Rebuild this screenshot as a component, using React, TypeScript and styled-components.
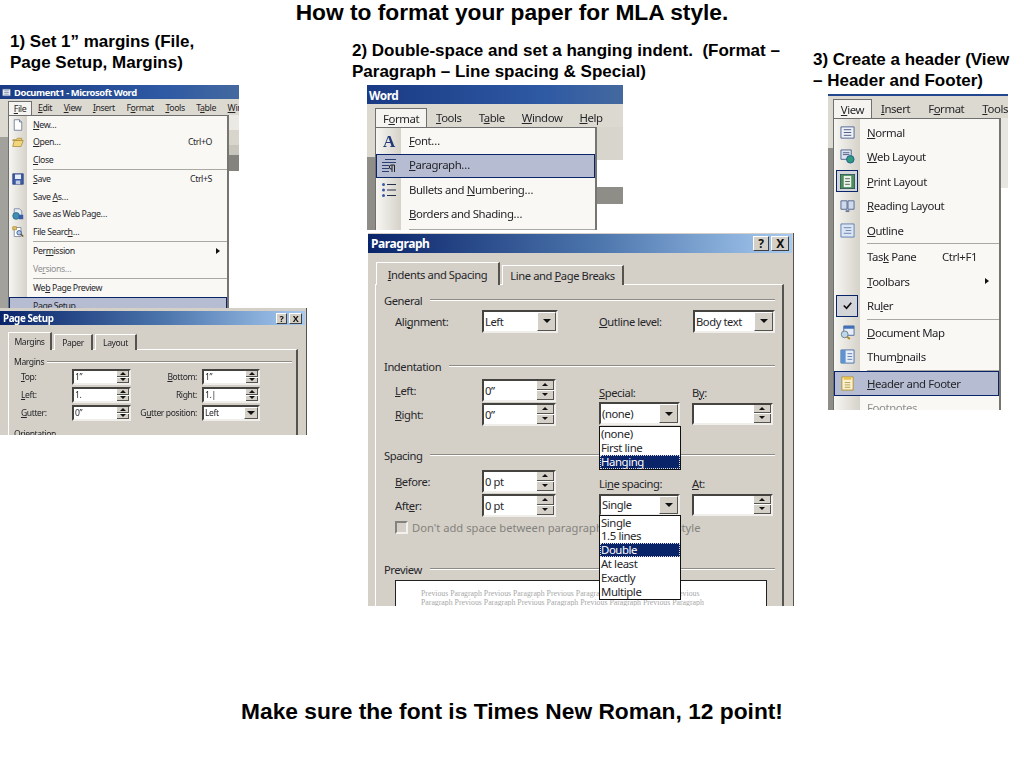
import React from "react";
import styled, { createGlobalStyle } from "styled-components";

const Global = createGlobalStyle`
  html, body { margin: 0; padding: 0; background: #fff; }
  #root { width: 1024px; height: 768px; overflow: hidden; }
`;

const UI = `"Noto Sans", "Open Sans", "Liberation Sans", sans-serif`;

const Page = styled.div`
  width: 1024px;
  height: 768px;
  display: flex;
  flex-direction: column;
  font-family: "Liberation Sans", Arial, sans-serif;
  color: #000;
  background: #fff;
`;
const Heading = styled.h1`
  margin: 0;
  height: 24px;
  font-size: 22.75px;
  line-height: 24px;
  font-weight: 700;
  text-align: center;
`;
const Columns = styled.div`
  display: grid;
  grid-template-columns: 352px 461px 211px;
  align-items: start;
`;
const Column = styled.section<{ $top: number; $gap: number }>`
  padding-top: ${(p) => p.$top}px;
  & > p { margin-bottom: ${(p) => p.$gap}px; }
`;
const Caption = styled.p<{ $left: number }>`
  margin: 0;
  padding-left: ${(p) => p.$left}px;
  font-size: 17px;
  line-height: 21px;
  font-weight: 700;
  white-space: pre;
`;
const Footer = styled.p`
  margin: auto 0 0;
  padding-bottom: 44px;
  font-size: 22.75px;
  line-height: 26px;
  font-weight: 700;
  text-align: center;
`;
const Shot = styled.div<{ $left?: number }>`
  margin-left: ${(p) => p.$left ?? 0}px;
  filter: blur(0.35px);
  font-family: ${UI};
  letter-spacing: -0.026em;
  color: #26262a;
`;

/* ---------- Word window ---------- */
const WordWindow = styled.div<{ $w: number; $h: number }>`
  width: ${(p) => p.$w}px;
  height: ${(p) => p.$h}px;
  overflow: hidden;
  display: flex;
  flex-direction: column;
  background: #fff;
`;
const WordTitle = styled.div<{ $h: number; $size: number }>`
  height: ${(p) => p.$h}px;
  flex: none;
  display: flex;
  align-items: center;
  gap: 3px;
  padding-left: 2px;
  background: linear-gradient(to right, #1a3a84, #2f5aa4 70%, #44699f);
  color: #fff;
  font-weight: 700;
  font-size: ${(p) => p.$size}px;
  white-space: nowrap;
`;
const TopRule = styled.div`
  height: 2px;
  flex: none;
  background: #24468e;
`;
const MenuBar = styled.div<{ $h: number; $pad: number; $gap: number; $size: number }>`
  height: ${(p) => p.$h}px;
  flex: none;
  display: flex;
  align-items: flex-end;
  gap: ${(p) => p.$gap}px;
  padding-left: ${(p) => p.$pad}px;
  background: #dcd9d0;
  font-size: ${(p) => p.$size}px;
  white-space: nowrap;
  overflow: hidden;
`;
const MenuTitle = styled.span<{ $open?: boolean; $w?: number; $h: number; $pull?: number }>`
  height: ${(p) => p.$h}px;
  display: flex;
  align-items: center;
  justify-content: center;
  flex: none;
  box-sizing: border-box;
  width: ${(p) => (p.$w ? `${p.$w}px` : "auto")};
  margin-right: ${(p) => -(p.$pull ?? 0)}px;
  ${(p) =>
    p.$open
      ? `border: 1px solid #707070; border-bottom: 0; background: #f5f4f0;`
      : ``}
`;
const WordBody = styled.div`
  flex: 1;
  display: flex;
  min-height: 0;
`;
const Strip = styled.div<{ $w: number; $bands: string }>`
  width: ${(p) => p.$w}px;
  flex: none;
  background: linear-gradient(to bottom, ${(p) => p.$bands});
`;
const Menu = styled.div<{ $w: number; $gutter: number; $top: number }>`
  width: ${(p) => p.$w}px;
  flex: none;
  box-sizing: border-box;
  border: 1px solid #6f6f6f;
  border-right: 2px solid #77756f;
  border-bottom: 0;
  padding-top: ${(p) => p.$top}px;
  background: linear-gradient(
    to right,
    #f7f6f2 0,
    #d5d2c9 ${(p) => p.$gutter}px,
    #f9f8f5 ${(p) => p.$gutter}px
  );
`;
const Row = styled.div<{ $h: number; $active?: boolean; $muted?: boolean; $size: number }>`
  height: ${(p) => p.$h}px;
  display: flex;
  align-items: center;
  box-sizing: border-box;
  font-size: ${(p) => p.$size}px;
  white-space: nowrap;
  color: ${(p) => (p.$muted ? "#8f8f8f" : "inherit")};
  ${(p) =>
    p.$active
      ? `background: #b6bdd2; outline: 1px solid #0a246a; outline-offset: -1px;`
      : ""}
`;
const IconSlot = styled.span<{ $w: number }>`
  width: ${(p) => p.$w}px;
  flex: none;
  display: flex;
  align-items: center;
  justify-content: center;
`;
const RowLabel = styled.span<{ $pad: number; $lift: number }>`
  flex: 1;
  padding-left: ${(p) => p.$pad}px;
  margin-top: ${(p) => -p.$lift}px;
`;
const Shortcut = styled.span<{ $right: number }>`
  padding-right: ${(p) => p.$right}px;
`;
const SubArrow = styled.span<{ $right: number }>`
  width: 0;
  height: 0;
  margin-right: ${(p) => p.$right}px;
  border-left: 4px solid #111;
  border-top: 3px solid transparent;
  border-bottom: 3px solid transparent;
`;
const Sep = styled.div<{ $left: number; $h: number }>`
  height: ${(p) => p.$h}px;
  margin-left: ${(p) => p.$left}px;
  display: flex;
  align-items: center;
  &::after { content: ""; flex: 1; height: 1px; background: #a9a8a2; }
`;
const Pressed = styled.span`
  display: flex;
  align-items: center;
  justify-content: center;
  width: 22px;
  height: 22px;
  box-sizing: border-box;
  border: 1px solid #0a246a;
  background: #d4d5d8;
`;

/* ---------- dialog ---------- */
const Dialog = styled.div<{ $w: number; $h: number; $edge: string; $mt?: number; $ml?: number }>`
  width: ${(p) => p.$w}px;
  height: ${(p) => p.$h}px;
  margin: ${(p) => p.$mt ?? 0}px 0 0 ${(p) => p.$ml ?? 0}px;
  overflow: hidden;
  box-sizing: border-box;
  padding: ${(p) => p.$edge};
  background: #d4d0c8;
  border-right: 1px solid #55534e;
`;
const CaptionBar = styled.div<{ $h: number; $size: number }>`
  height: ${(p) => p.$h}px;
  display: flex;
  align-items: center;
  justify-content: space-between;
  padding: 0 3px;
  background: linear-gradient(to right, #0a246a, #4e77ae 55%, #a6caf0);
  color: #fff;
  font-weight: 700;
  font-size: ${(p) => p.$size}px;
  white-space: nowrap;
`;
const CaptionBtns = styled.span<{ $gap: number }>`
  display: flex;
  gap: ${(p) => p.$gap}px;
`;
const CaptionBtn = styled.span<{ $w: number; $h: number; $size: number }>`
  width: ${(p) => p.$w}px;
  height: ${(p) => p.$h}px;
  box-sizing: border-box;
  display: flex;
  align-items: center;
  justify-content: center;
  background: #d4d0c8;
  border: 1px solid;
  border-color: #fff #404040 #404040 #fff;
  color: #111;
  font-size: ${(p) => p.$size}px;
  font-weight: 700;
  line-height: 1;
`;
const TabStrip = styled.div<{ $top: number; $left: number }>`
  display: flex;
  align-items: flex-end;
  gap: 2px;
  padding: ${(p) => p.$top}px 0 0 ${(p) => p.$left}px;
  position: relative;
  z-index: 1;
`;
const Tab = styled.span<{ $w: number; $h: number; $size: number }>`
  width: ${(p) => p.$w}px;
  height: ${(p) => p.$h}px;
  box-sizing: border-box;
  display: flex;
  align-items: center;
  justify-content: center;
  background: #d4d0c8;
  font-size: ${(p) => p.$size}px;
  white-space: nowrap;
  border-top: 1px solid #fff;
  border-left: 1px solid #fff;
  border-right: 2px solid #55534e;
`;
const Panel = styled.div<{ $ml: number; $mr: number; $pad: string; $size: number }>`
  margin: -1px ${(p) => p.$mr}px 0 ${(p) => p.$ml}px;
  padding: ${(p) => p.$pad};
  border-top: 1px solid #fff;
  border-left: 1px solid #fff;
  border-right: 2px solid #55534e;
  font-size: ${(p) => p.$size}px;
`;
const Legend = styled.div<{ $h: number; $top?: number; $gap: number }>`
  height: ${(p) => p.$h}px;
  margin-top: ${(p) => p.$top ?? 0}px;
  display: flex;
  align-items: center;
  gap: ${(p) => p.$gap}px;
  &::after {
    content: "";
    flex: 1;
    height: 2px;
    background: linear-gradient(to bottom, #8e8b84 50%, #fff 50%);
  }
`;
const SetupGrid = styled.div`
  display: grid;
  grid-template-columns: 51px 59px 71px 59px;
  grid-auto-rows: 18px;
  align-items: center;
  padding-left: 7px;
`;
const Cutoff = styled.div`
  margin-top: 6px;
`;
const RightCell = styled.span`
  text-align: right;
  padding-right: 5px;
  white-space: nowrap;
`;
const Field = styled.span<{ $w: number; $h: number }>`
  position: relative;
  width: ${(p) => p.$w}px;
  height: ${(p) => p.$h}px;
  box-sizing: border-box;
  display: flex;
  align-items: center;
  background: #fff;
  border: 2px solid;
  border-color: #45433f #efeeea #efeeea #45433f;
  padding-left: 1px;
  white-space: nowrap;
`;
const FieldValue = styled.span`
  flex: 1;
  overflow: hidden;
`;
const Stepper = styled.span<{ $w: number }>`
  width: ${(p) => p.$w}px;
  align-self: stretch;
  flex: none;
  display: flex;
  flex-direction: column;
  gap: 1px;
  background: #fff;
`;
const StepBtn = styled.span<{ $down?: boolean }>`
  flex: 1;
  display: flex;
  align-items: center;
  justify-content: center;
  background: #d4d0c8;
  border-bottom: 1px solid #55534e;
  border-right: 1px solid #55534e;
  &::after {
    content: "";
    border-left: 3px solid transparent;
    border-right: 3px solid transparent;
    ${(p) => (p.$down ? "border-top: 3px solid #111;" : "border-bottom: 3px solid #111;")}
  }
`;
const DropBtn = styled.span<{ $w: number }>`
  width: ${(p) => p.$w}px;
  align-self: stretch;
  flex: none;
  display: flex;
  align-items: center;
  justify-content: center;
  background: #d4d0c8;
  border: 1px solid;
  border-color: #fff #55534e #55534e #fff;
  &::after {
    content: "";
    border-left: 4px solid transparent;
    border-right: 4px solid transparent;
    border-top: 4px solid #111;
  }
`;
const Group = styled.div<{ $top: number }>`
  display: flex;
  padding-left: 11px;
  margin-top: ${(p) => p.$top}px;
`;
const Pair = styled.div<{ $cols: string; $w?: number }>`
  width: ${(p) => (p.$w ? `${p.$w}px` : "auto")};
  flex: none;
  display: grid;
  grid-template-columns: ${(p) => p.$cols};
  grid-auto-rows: 24px;
  align-items: center;
`;
const PairRight = styled.div<{ $top: number }>`
  display: grid;
  grid-template-columns: 93px 82px;
  padding-top: ${(p) => p.$top}px;
  grid-template-rows: 18px auto;
  align-items: center;
`;
const Disabled = styled.div`
  display: flex;
  align-items: center;
  gap: 4px;
  height: 14px;
  margin: 3px 0 0 11px;
  color: #84827c;
  white-space: nowrap;
  letter-spacing: 0;
`;
const Check = styled.span`
  width: 13px;
  height: 13px;
  box-sizing: border-box;
  flex: none;
  border: 2px solid;
  border-color: #84827c #f2f1ed #f2f1ed #84827c;
`;
const PreviewBox = styled.div`
  margin: 3px 0 0 11px;
  width: 372px;
  height: 40px;
  box-sizing: border-box;
  background: #fff;
  border: 1px solid #222;
  padding: 8px 0 0 25px;
  font-family: "Liberation Serif", serif;
  font-size: 7.8px;
  letter-spacing: 0;
  line-height: 9px;
  color: #a8a8a8;
  white-space: nowrap;
`;
const Popup = styled.div<{ $w: number; $drop: number }>`
  position: absolute;
  left: -2px;
  top: 100%;
  width: ${(p) => p.$w}px;
  margin-top: ${(p) => p.$drop}px;
  box-sizing: border-box;
  background: #fff;
  border: 1px solid #111;
  z-index: 3;
`;
const PopupItem = styled.div<{ $on?: boolean }>`
  height: 13.9px;
  line-height: 13.9px;
  padding-left: 1px;
  font-size: 11.4px;
  ${(p) => (p.$on ? "background: #0a246a; color: #fff; outline: 1px dotted #ddd; outline-offset: -1px;" : "")}
`;

/* ---------- helpers ---------- */
const Mnemonic = styled.u`
  text-decoration-thickness: 1px;
  text-underline-offset: 1px;
`;
const M = ({ t }: { t: string }) => {
  const i = t.indexOf("&");
  if (i < 0) return <span>{t}</span>;
  return (
    <span>
      {t.slice(0, i)}
      <Mnemonic>{t[i + 1]}</Mnemonic>
      {t.slice(i + 2)}
    </span>
  );
};

const Ico = ({ s, children }: { s: number; children: React.ReactNode }) => (
  <svg width={s} height={s} viewBox="0 0 16 16" aria-hidden="true">
    {children}
  </svg>
);

type IconName =
  | "new" | "open" | "save" | "web" | "search" | "font" | "para" | "bullets"
  | "normal" | "webl" | "print" | "read" | "outline" | "check" | "map" | "thumb" | "header";

const Glyph = ({ n, s }: { n: IconName; s: number }) => {
  switch (n) {
    case "new":
      return <Ico s={s}><path d="M3 1h7l3 3v11H3z" fill="#fff" stroke="#5a6a8a" /><path d="M10 1v3h3" fill="#cfd8ea" stroke="#5a6a8a" /></Ico>;
    case "open":
      return <Ico s={s}><path d="M1 5h5l1-2h6v3H1z" fill="#e8c766" stroke="#a88a38" /><path d="M1 14l2-8h12l-3 8z" fill="#f2d67c" stroke="#a88a38" /></Ico>;
    case "save":
      return <Ico s={s}><path d="M1 1h14v14H1z" fill="#3c5ca8" stroke="#2a3f78" /><path d="M4 2h8v6H4z" fill="#e8ecf6" /><path d="M5 10h6v5H5z" fill="#c2cbe0" /></Ico>;
    case "web":
      return <Ico s={s}><path d="M3 1h7l3 3v7H3z" fill="#e6ecf6" stroke="#6a7a9a" /><circle cx="5.5" cy="10.5" r="4.5" fill="#3f8fb0" stroke="#2b6480" /><path d="M9 9h6v6H9z" fill="#3c5ca8" /></Ico>;
    case "search":
      return <Ico s={s}><path d="M3 2h9v12H3z" fill="#fff" stroke="#6a7a9a" /><path d="M1 1h5v4H1z" fill="#e3c35c" stroke="#a88a38" /><circle cx="9.5" cy="9" r="3" fill="#a8cbe8" stroke="#2a3f78" /><path d="M12 11l3 3" stroke="#6b4a18" strokeWidth="1.6" /></Ico>;
    case "font":
      return <Ico s={s}><text x="8" y="14" textAnchor="middle" fontFamily="Liberation Serif, serif" fontWeight="700" fontSize="17" fill="#23397a">A</text></Ico>;
    case "para":
      return <Ico s={s}><path d="M4 1.5h11M1 4.5h14M1 7.5h7M1 10.5h7M1 13.5h7" stroke="#2b3f70" /><path d="M11 14V7M13.5 14V7M13.5 7h-3.2a2 2 0 0 0 0 4H11" stroke="#222" fill="none" /></Ico>;
    case "bullets":
      return <Ico s={s}><path d="M6 2.5h9M6 8h9M6 13.5h9" stroke="#26304e" strokeWidth="1.2" /><circle cx="2.5" cy="2.5" r="1.5" fill="#3a5aa8" /><circle cx="2.5" cy="8" r="1.5" fill="#3a5aa8" /><circle cx="2.5" cy="13.5" r="1.5" fill="#3a5aa8" /></Ico>;
    case "normal":
      return <Ico s={s}><path d="M1 2h14v12H1z" fill="#eef1f8" stroke="#4f6590" /><path d="M4 5h8M4 8h8M4 11h8" stroke="#4a5a80" /></Ico>;
    case "webl":
      return <Ico s={s}><path d="M1 1h11v10H1z" fill="#dfe5f0" stroke="#4f6590" /><path d="M3 4h7M3 6h7" stroke="#4a5a80" /><circle cx="11" cy="11" r="4" fill="#2f9a7e" stroke="#1f5f90" /></Ico>;
    case "print":
      return <Ico s={s}><path d="M0 0h16v16H0z" fill="#4f8e5c" stroke="#1c3563" /><path d="M4 2h8v12H4z" fill="#eaf0ea" /><path d="M5.5 5h5M5.5 8h5M5.5 11h5" stroke="#51614f" /></Ico>;
    case "read":
      return <Ico s={s}><path d="M1 3h6.5v9H1zM8.5 3H15v9H8.5z" fill="#cfdaec" stroke="#55688f" /><path d="M6 13h4v2H6z" fill="#6b7a98" /></Ico>;
    case "outline":
      return <Ico s={s}><path d="M1 1h14v14H1z" fill="#dbe5f4" stroke="#5f7fb0" /><path d="M4 5h8M6 8h6M4 11h8" stroke="#6c84ae" /></Ico>;
    case "check":
      return <Ico s={s}><path d="M4 8l3 3 5-6" fill="none" stroke="#111" strokeWidth="1.8" /></Ico>;
    case "map":
      return <Ico s={s}><path d="M4 1h11v10H4z" fill="#e6edf8" stroke="#4f6ea0" /><path d="M4 1h11v3H4z" fill="#3f70b8" /><circle cx="5" cy="10" r="3.6" fill="#bcd8ea" stroke="#6d7f8e" /><path d="M7.5 12.5l3 2.5" stroke="#b08a2a" strokeWidth="2" /></Ico>;
    case "thumb":
      return <Ico s={s}><path d="M1 1h14v14H1z" fill="#e8eef8" stroke="#4f6ea0" /><path d="M1 1h5v14H1z" fill="#5f93d0" /><path d="M8 5h5M8 8h5M8 11h5" stroke="#5f7fb0" /></Ico>;
    case "header":
      return <Ico s={s}><path d="M2 1h12v14H2z" fill="#fbf3cf" stroke="#b48f2e" /><path d="M4 1h8v3H4z" fill="#e8c14e" /><path d="M5 7h6M5 9.5h6M5 12h6" stroke="#b59a50" /></Ico>;
  }
};

type Item =
  | { sep: number }
  | { t: string; i?: IconName; k?: string; arrow?: boolean; active?: boolean; muted?: boolean; pressed?: boolean };

const MenuList = ({
  items, w, gutter, top, h, size, icon, pad, kRight, arrowRight, lift = 0,
}: {
  items: Item[]; w: number; gutter: number; top: number; h: number; size: number; icon: number; pad: number; kRight: number; arrowRight: number; lift?: number;
}) => (
  <Menu $w={w} $gutter={gutter} $top={top}>
    {items.map((it, idx) =>
      "sep" in it ? (
        <Sep key={idx} $left={gutter + pad} $h={it.sep} />
      ) : (
        <Row key={idx} $h={h} $size={size} $active={it.active} $muted={it.muted}>
          <IconSlot $w={gutter}>
            {it.i &&
              (it.pressed ? (
                <Pressed>
                  <Glyph n={it.i} s={icon} />
                </Pressed>
              ) : (
                <Glyph n={it.i} s={icon} />
              ))}
          </IconSlot>
          <RowLabel $pad={pad} $lift={lift}>
            <M t={it.t} />
          </RowLabel>
          {it.k && <Shortcut $right={kRight}>{it.k}</Shortcut>}
          {it.arrow && <SubArrow $right={arrowRight} />}
        </Row>
      )
    )}
  </Menu>
);

const SpinField = ({ w, h, v, step }: { w: number; h: number; v?: string; step: number }) => (
  <Field $w={w} $h={h}>
    <FieldValue>{v}</FieldValue>
    <Stepper $w={step}>
      <StepBtn />
      <StepBtn $down />
    </Stepper>
  </Field>
);
const ComboField = ({ w, h, v, drop, children }: { w: number; h: number; v: string; drop: number; children?: React.ReactNode }) => (
  <Field $w={w} $h={h}>
    <FieldValue>{v}</FieldValue>
    <DropBtn $w={drop} />
    {children}
  </Field>
);

const fileItems: Item[] = [
  { t: "&New…", i: "new" },
  { t: "&Open…", i: "open", k: "Ctrl+O" },
  { t: "&Close" },
  { sep: 2 },
  { t: "&Save", i: "save", k: "Ctrl+S" },
  { t: "Save &As…" },
  { t: "Save as Web Pa&ge…", i: "web" },
  { t: "File Searc&h…", i: "search" },
  { sep: 2 },
  { t: "Per&mission", arrow: true },
  { t: "Ve&rsions…", muted: true },
  { sep: 2 },
  { t: "We&b Page Preview" },
  { t: "Page Set&up…", active: true },
];
const formatItems: Item[] = [
  { t: "&Font…", i: "font" },
  { t: "&Paragraph…", i: "para", active: true },
  { t: "Bullets and &Numbering…", i: "bullets" },
  { t: "&Borders and Shading…" },
  { sep: 4 },
];
const viewItems: Item[] = [
  { t: "&Normal", i: "normal" },
  { t: "&Web Layout", i: "webl" },
  { t: "&Print Layout", i: "print", pressed: true },
  { t: "&Reading Layout", i: "read" },
  { t: "&Outline", i: "outline" },
  { sep: 2 },
  { t: "Tas&k Pane", k: "Ctrl+F1" },
  { t: "&Toolbars", arrow: true },
  { t: "Ru&ler", i: "check", pressed: true },
  { sep: 2 },
  { t: "&Document Map", i: "map" },
  { t: "Thum&bnails", i: "thumb" },
  { sep: 2 },
  { t: "&Header and Footer", i: "header", active: true },
  { t: "Footnotes", muted: true },
];

const PageSetup = () => (
  <Dialog $w={307} $h={127} $edge="3px 1px 0 0">
    <CaptionBar $h={14} $size={9.8}>
      <span>Page Setup</span>
      <CaptionBtns $gap={2}>
        <CaptionBtn $w={11} $h={11} $size={9}>?</CaptionBtn>
        <CaptionBtn $w={13} $h={11} $size={9}>X</CaptionBtn>
      </CaptionBtns>
    </CaptionBar>
    <TabStrip $top={7} $left={8}>
      <Tab $w={44} $h={18} $size={8.6}><M t="Margins" /></Tab>
      <Tab $w={39} $h={16} $size={8.6}><M t="Paper" /></Tab>
      <Tab $w={42} $h={16} $size={8.6}><M t="Layout" /></Tab>
    </TabStrip>
    <Panel $ml={8} $mr={7} $pad="6px 4px 0 5px" $size={8.6}>
      <Legend $h={12} $gap={3}>Margins</Legend>
      <SetupGrid>
        <M t="&Top:" />
        <SpinField w={59} h={16} v="1”" step={12} />
        <RightCell><M t="&Bottom:" /></RightCell>
        <SpinField w={58} h={16} v="1”" step={12} />
        <M t="&Left:" />
        <SpinField w={59} h={16} v="1." step={12} />
        <RightCell><M t="Ri&ght:" /></RightCell>
        <SpinField w={58} h={16} v="1.|" step={12} />
        <M t="&Gutter:" />
        <SpinField w={59} h={16} v="0”" step={12} />
        <RightCell><M t="G&utter position:" /></RightCell>
        <ComboField w={58} h={16} v="Left" drop={12} />
      </SetupGrid>
      <Cutoff>Orientation</Cutoff>
    </Panel>
  </Dialog>
);

const Paragraph = () => (
  <Dialog $w={426} $h={373} $edge="1px 1px 0 0" $mt={3} $ml={1}>
    <CaptionBar $h={19} $size={12}>
      <span>Paragraph</span>
      <CaptionBtns $gap={2}>
        <CaptionBtn $w={16} $h={15} $size={12}>?</CaptionBtn>
        <CaptionBtn $w={18} $h={15} $size={12}>X</CaptionBtn>
      </CaptionBtns>
    </CaptionBar>
    <TabStrip $top={9} $left={8}>
      <Tab $w={124} $h={23} $size={11.2}><M t="&Indents and Spacing" /></Tab>
      <Tab $w={122} $h={20} $size={11.2}><M t="Line and &Page Breaks" /></Tab>
    </TabStrip>
    <Panel $ml={7} $mr={8} $pad="7px 7px 0 8px" $size={11.2}>
      <Legend $h={16} $gap={8}>General</Legend>
      <Group $top={1}>
        <Pair $cols="87px 76px" $w={204}>
          <M t="Ali&gnment:" />
          <ComboField w={76} h={23} v="Left" drop={17} />
        </Pair>
        <Pair $cols="94px 82px">
          <M t="&Outline level:" />
          <ComboField w={82} h={23} v="Body text" drop={17} />
        </Pair>
      </Group>
      <Legend $h={16} $top={25} $gap={8}>Indentation</Legend>
      <Group $top={4}>
        <Pair $cols="87px 76px" $w={204}>
          <M t="&Left:" />
          <SpinField w={74} h={23} v="0”" step={17} />
          <M t="&Right:" />
          <SpinField w={74} h={23} v="0”" step={17} />
        </Pair>
        <PairRight $top={5}>
          <M t="&Special:" />
          <M t="B&y:" />
          <ComboField w={81} h={23} v="(none)" drop={17}>
            <Popup $w={82} $drop={3}>
              <PopupItem>(none)</PopupItem>
              <PopupItem>First line</PopupItem>
              <PopupItem $on>Hanging</PopupItem>
            </Popup>
          </ComboField>
          <SpinField w={81} h={22} step={17} />
        </PairRight>
      </Group>
      <Legend $h={16} $top={21} $gap={8}>Spacing</Legend>
      <Group $top={6}>
        <Pair $cols="87px 76px" $w={204}>
          <M t="&Before:" />
          <SpinField w={74} h={23} v="0 pt" step={17} />
          <M t="Aft&er:" />
          <SpinField w={74} h={23} v="0 pt" step={17} />
        </Pair>
        <PairRight $top={5}>
          <M t="Li&ne spacing:" />
          <M t="&At:" />
          <ComboField w={81} h={22} v="Single" drop={17}>
            <Popup $w={82} $drop={1}>
              <PopupItem>Single</PopupItem>
              <PopupItem>1.5 lines</PopupItem>
              <PopupItem $on>Double</PopupItem>
              <PopupItem>At least</PopupItem>
              <PopupItem>Exactly</PopupItem>
              <PopupItem>Multiple</PopupItem>
            </Popup>
          </ComboField>
          <SpinField w={81} h={22} step={17} />
        </PairRight>
      </Group>
      <Disabled>
        <Check />
        Don't add space between paragraphs of the same style
      </Disabled>
      <Legend $h={16} $top={27} $gap={8}>Preview</Legend>
      <PreviewBox>
        Previous Paragraph Previous Paragraph Previous Paragraph Previous Paragraph Previous
        <br />
        Paragraph Previous Paragraph Previous Paragraph Previous Paragraph Previous Paragraph
      </PreviewBox>
    </Panel>
  </Dialog>
);

export default function App() {
  return (
    <Page>
      <Global />
      <Heading>How to format your paper for MLA style.</Heading>
      <Columns>
        <Column $top={7} $gap={12}>
          <Caption $left={10}>{"1) Set 1” margins (File,\nPage Setup, Margins)"}</Caption>
          <Shot>
            <WordWindow $w={239} $h={223}>
              <WordTitle $h={14} $size={9.4}>
                <Glyph n="normal" s={9} />
                Document1 - Microsoft Word
              </WordTitle>
              <MenuBar $h={16} $pad={8} $gap={11.6} $size={8.8}>
                <MenuTitle $open $w={24} $h={14} $pull={5.6}><M t="&File" /></MenuTitle>
                <MenuTitle $h={14}><M t="&Edit" /></MenuTitle>
                <MenuTitle $h={14}><M t="&View" /></MenuTitle>
                <MenuTitle $h={14}><M t="&Insert" /></MenuTitle>
                <MenuTitle $h={14}><M t="F&ormat" /></MenuTitle>
                <MenuTitle $h={14}><M t="&Tools" /></MenuTitle>
                <MenuTitle $h={14}><M t="T&able" /></MenuTitle>
                <MenuTitle $h={14}><M t="&Window" /></MenuTitle>
              </MenuBar>
              <WordBody>
                <Strip $w={8} $bands="#dcd9d0 0 22px, #a3a19c 22px 100%" />
                <MenuList items={fileItems} w={221} gutter={18} top={0} h={17.5} size={8.8} icon={12} pad={6} kRight={15} arrowRight={7} />
                <Strip $w={10} $bands="#ebe9e3 0 15px, #d8d5cc 15px 30px, #c8c5bd 30px 40px, #85837e 40px 56px, #fff 56px" />
              </WordBody>
            </WordWindow>
            <PageSetup />
          </Shot>
        </Column>
        <Column $top={16} $gap={3}>
          <Caption $left={0}>{"2) Double-space and set a hanging indent.  (Format –\nParagraph – Line spacing & Special)"}</Caption>
          <Shot $left={15}>
            <WordWindow $w={256} $h={145}>
              <WordTitle $h={19} $size={11.8}>Word</WordTitle>
              <MenuBar $h={23} $pad={8} $gap={17} $size={11.4}>
                <MenuTitle $open $w={52} $h={19} $pull={8}><M t="F&ormat" /></MenuTitle>
                <MenuTitle $h={19}><M t="&Tools" /></MenuTitle>
                <MenuTitle $h={19}><M t="T&able" /></MenuTitle>
                <MenuTitle $h={19}><M t="&Window" /></MenuTitle>
                <MenuTitle $h={19}><M t="&Help" /></MenuTitle>
              </MenuBar>
              <WordBody>
                <Strip $w={8} $bands="#dcd9d0 0 30px, #8f8d88 30px 100%" />
                <MenuList items={formatItems} w={222} gutter={25} top={1} h={24.5} size={11.4} icon={16} pad={8} kRight={12} arrowRight={8} lift={2} />
                <Strip $w={26} $bands="#d8d5cc 0 33px, #fff 33px 60px, #8f8d88 60px 77px, #fff 77px" />
              </WordBody>
            </WordWindow>
            <Paragraph />
          </Shot>
        </Column>
        <Column $top={25} $gap={3}>
          <Caption $left={0}>{"3) Create a header (View\n– Header and Footer)"}</Caption>
          <Shot $left={15}>
            <WordWindow $w={180} $h={316}>
              <TopRule />
              <MenuBar $h={22} $pad={5} $gap={18} $size={11.4}>
                <MenuTitle $open $w={39} $h={19} $pull={9}><M t="&View" /></MenuTitle>
                <MenuTitle $h={19}><M t="&Insert" /></MenuTitle>
                <MenuTitle $h={19}><M t="F&ormat" /></MenuTitle>
                <MenuTitle $h={19}><M t="&Tools" /></MenuTitle>
              </MenuBar>
              <WordBody>
                <Strip $w={5} $bands="#dcd9d0 0 30px, #8f8d88 30px 100%" />
                <MenuList items={viewItems} w={168} gutter={26} top={1} h={24.5} size={11.4} icon={15} pad={7} kRight={22} arrowRight={10} />
                <Strip $w={7} $bands="#e8e6e0 0 70px, #fff 70px 100%" />
              </WordBody>
            </WordWindow>
          </Shot>
        </Column>
      </Columns>
      <Footer>Make sure the font is Times New Roman, 12 point!</Footer>
    </Page>
  );
}
